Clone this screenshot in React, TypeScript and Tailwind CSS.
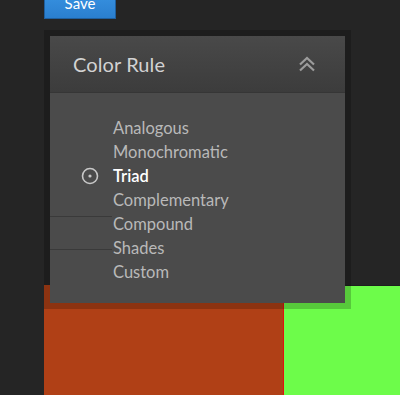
import React from "react";

const rules = ["Analogous", "Monochromatic", "Triad", "Complementary", "Compound", "Shades", "Custom"];

function DoubleChevron() {
  return (
    <svg width="18" height="16" viewBox="0 0 18 16" fill="none" stroke="#9c9c9c" strokeWidth="2.2">
      <path d="M2 8.5 L9 2 L16 8.5" />
      <path d="M2 14.5 L9 8 L16 14.5" />
    </svg>
  );
}

function RadioMark() {
  return (
    <svg width="18" height="18" viewBox="0 0 18 18">
      <circle cx="9" cy="9" r="7.5" fill="none" stroke="#c8c8c8" strokeWidth="1.6" />
      <circle cx="9" cy="9" r="1.6" fill="#c8c8c8" />
    </svg>
  );
}

export default function App() {
  return (
    <div
      className="relative w-[400px] h-[395px] overflow-hidden bg-[#252525]"
      style={{ fontFamily: "Lato, 'Open Sans', sans-serif" }}
    >
      {/* barra superior con botón guardar */}
      <div className="pl-[44px]">
        <button className="-mt-[12px] h-[31px] w-[72px] bg-gradient-to-b from-[#3a95e4] to-[#2a7fcf] border border-[#1f5f9e] text-white text-[15px] leading-none flex items-center justify-center">
          Save
        </button>
      </div>

      {/* muestras de color */}
      <div className="absolute left-[44px] right-0 top-[285px] bottom-0 flex">
        <div className="w-[240px] bg-[#b04016] border-r border-[#e01010]" />
        <div className="flex-1 bg-[#6dfc4a] border-t border-[#1e1e1e]" />
      </div>

      {/* popover Color Rule */}
      <div className="absolute left-[50px] top-[36px] w-[295px] h-[267px] shadow-[0_0_0_6px_rgba(0,0,0,0.2)] bg-[#4b4b4b] flex flex-col">
        <div className="h-[57px] shrink-0 bg-gradient-to-b from-[#494949] to-[#3c3c3c] border-b border-[#363636] flex items-center justify-between pl-[23px] pr-[29px]">
          <h2 className="text-[20px] text-[#d2d2d2] tracking-[0.1px]">Color Rule</h2>
          <DoubleChevron />
        </div>

        <div className="relative flex-1 pt-[23px]">
          <div className="absolute left-0 top-[123px] w-[62px] h-px bg-[#3a3a3a]" />
          <div className="absolute left-0 top-[156px] w-[62px] h-px bg-[#3a3a3a]" />
          <ul className="flex flex-col">
            {rules.map((r) => (
              <li key={r} className="h-[24px] flex items-center">
                <span className="w-[63px] flex justify-end pr-[14px]">{r === "Triad" && <RadioMark />}</span>
                <span
                  className={
                    r === "Triad"
                      ? "text-[16.5px] font-semibold text-white"
                      : "text-[16.5px] text-[#b9b9b9]"
                  }
                >
                  {r}
                </span>
              </li>
            ))}
          </ul>
        </div>
      </div>
    </div>
  );
}
